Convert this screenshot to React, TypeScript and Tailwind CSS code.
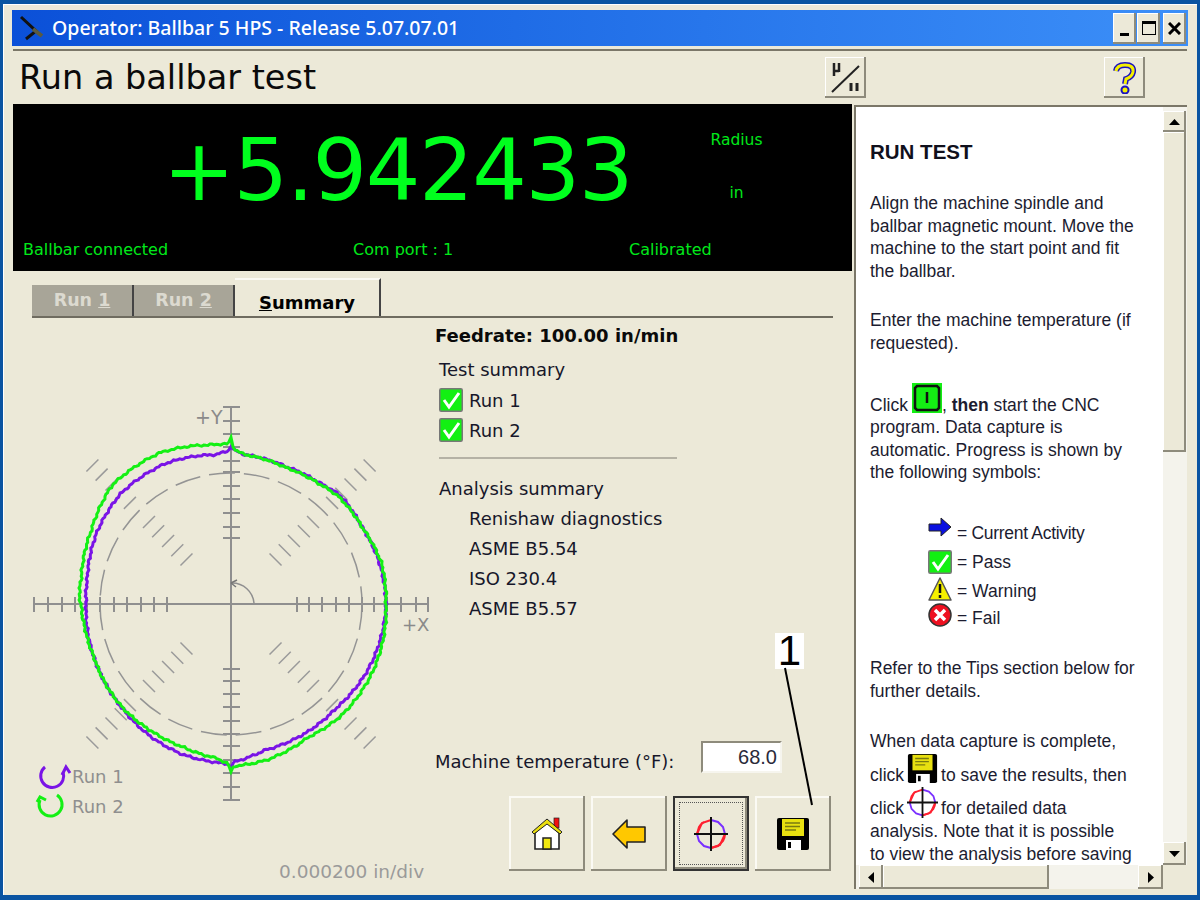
import React from "react";

const pk: number[][] = [[0,155],[15,154],[30,152],[45,154],[54,150],[68,148],[85,150],[89,154],[90,158],[91,153],[96,150],[115,155],[135,156],[152,152],[170,146],[180,145],[190,146],[201,147],[215,149],[225,151],[239,155],[252,158],[265,159],[269,160],[270,164],[271,158],[283,150],[300,149],[315,148],[335,152],[350,154],[360,155]];
const gk: number[][] = [[0,155],[15,156],[30,152],[45,152],[54,149],[68,147],[85,150],[89,155],[90,166],[91,160],[98,160.5],[115,167],[135,168],[152,158],[170,152],[177,152],[180,150],[190,148],[201,147],[215,149],[225,150],[239,150],[252,151],[265,155],[269,160],[270,168],[271,162],[283,160],[300,154],[315,157],[335,157],[350,156],[360,155]];

function trace(keys: number[][], seed: number) {
  const pts: string[] = [];
  for (let a = 0; a < 360; a += 0.75) {
    let i = 0;
    while (keys[i + 1][0] <= a) i++;
    const [a0, r0] = keys[i];
    const [a1, r1] = keys[i + 1];
    const r = r0 + ((r1 - r0) * (a - a0)) / (a1 - a0) + 0.6 * Math.sin(a * 2.7 + seed) + 0.5 * Math.sin(a * 7.3 + seed * 2);
    const t = (a * Math.PI) / 180;
    pts.push(`${(232 + r * Math.cos(t)).toFixed(1)},${(604 - r * Math.sin(t)).toFixed(1)}`);
  }
  return pts.join(" ");
}

const xTicks = [35, 49, 63, 76, 88, 101, 115, 128, 142, 155, 168, 298, 310, 323, 337, 350, 363, 375, 388, 402, 417, 429];
const yTicks = [407, 421, 434, 447, 461, 472, 486, 499, 513, 527, 538, 669, 681, 694, 707, 721, 734, 746, 760, 773, 787, 800];
const dTicks = [63, 76, 89, 103, 116, 143, 156, 169, 183, 196];

function Chart() {
  const s = Math.SQRT1_2;
  return (
    <svg className="block w-[422px] h-[567px]" viewBox="14 318 422 567" fill="none">
      <g stroke="#8f8f8f" strokeWidth="2">
        <line x1="35" y1="604" x2="430" y2="604" />
        <line x1="232" y1="406" x2="232" y2="801" />
        {xTicks.map((x) => <line key={x} x1={x} y1="597" x2={x} y2="612" />)}
        {yTicks.map((y) => <line key={y} x1="224" y1={y} x2="241" y2={y} />)}
      </g>
      <g stroke="#9a9a9a" strokeWidth="1.5">
        {[[-1, -1], [1, -1], [-1, 1], [1, 1]].map(([sx, sy]) =>
          dTicks.map((d) => {
            const cx = 232 + sx * d * s;
            const cy = 604 + sy * d * s;
            const h = 6;
            return <line key={`${sx}${sy}${d}`} x1={cx - sy * h} y1={cy + sx * h} x2={cx + sy * h} y2={cy - sx * h} />;
          })
        )}
      </g>
      <circle cx="232" cy="604" r="131" stroke="#949494" strokeWidth="1.5" strokeDasharray="26 9" />
      <path d="M233 583 A22 22 0 0 1 255 603" stroke="#8f8f8f" strokeWidth="1.5" />
      <path d="M232 583 L238 580 M232 583 L237 587" stroke="#777" strokeWidth="1.5" />
      <polygon points={trace(pk, 1.1)} stroke="#7a14e6" strokeWidth="3" />
      <polygon points={trace(gk, 2.9)} stroke="#14f014" strokeWidth="3" />
      <text x="196" y="424" fill="#8a8a8a" fontSize="19" fontFamily="'DejaVu Sans', sans-serif">+Y</text>
      <text x="403" y="631" fill="#8a8a8a" fontSize="18" fontFamily="'DejaVu Sans', sans-serif">+X</text>
      <path d="M46 767 A11.5 11.5 0 1 0 64 772" stroke="#7a14e6" strokeWidth="3" />
      <path d="M63 775 L67 767 L71 773" stroke="#7a14e6" strokeWidth="3" />
      <path d="M58 795 A11.5 11.5 0 1 1 41 800" stroke="#14f014" strokeWidth="3" />
      <path d="M38 802 L41 797 L47 800" stroke="#14f014" strokeWidth="3" />
      <text x="73" y="783" fill="#8f8f8f" fontSize="18" fontFamily="'DejaVu Sans', sans-serif">Run 1</text>
      <text x="73" y="813" fill="#8f8f8f" fontSize="18" fontFamily="'DejaVu Sans', sans-serif">Run 2</text>
      <text x="280" y="878" fill="#9a9a9a" fontSize="18.5" fontFamily="'DejaVu Sans', sans-serif">0.000200 in/div</text>
    </svg>
  );
}

function Floppy({ size = 34 }: { size?: number }) {
  return (
    <svg width={size} height={size} viewBox="0 0 34 34">
      <path d="M3 1 H31 Q33 1 33 3 V31 Q33 33 31 33 H3 Q1 33 1 31 V3 Q1 1 3 1Z" fill="#000" />
      <rect x="6" y="2" width="22" height="17" fill="#e8e010" />
      <path d="M9 6 H24 M9 9.5 H24 M9 13 H20" stroke="#7a7a10" strokeWidth="1.5" />
      <rect x="10" y="23" width="15" height="10" fill="#fff" />
      <rect x="12" y="25" width="3" height="6" fill="#000" />
    </svg>
  );
}

function Target({ size = 34 }: { size?: number }) {
  return (
    <svg width={size} height={size} viewBox="0 0 34 34" fill="none">
      <path d="M10 5 A14.5 14.5 0 0 0 5 10 L3 17 M31 17 A14.5 14.5 0 0 1 29 24 L24 29 L17 31" stroke="#ff2030" strokeWidth="2" />
      <path d="M17 3 L24 5 L29 10 L31 17 M3 17 L5 24 L10 29 L17 31" stroke="#7a30ff" strokeWidth="2" />
      <path d="M17 3 L8 6 L3 17 M17 31 L26 28 L31 17" stroke="#ff2030" strokeWidth="2" />
      <path d="M17 0 V34 M0 17 H34" stroke="#111" strokeWidth="2" />
    </svg>
  );
}

function Home() {
  return (
    <svg width="32" height="34" viewBox="0 0 32 34">
      <rect x="23" y="1" width="5" height="10" fill="#f01010" stroke="#222" strokeWidth="0.7" />
      <path d="M4 16 V32 H28 V16 L16 5 Z" fill="#fff" stroke="#222" strokeWidth="1.6" />
      <path d="M1 15 L16 2 L31 15 L29 17 L16 7 L3 17 Z" fill="#eadf10" stroke="#222" strokeWidth="1" />
      <rect x="12" y="21" width="8" height="11" fill="#f0e810" stroke="#222" strokeWidth="1.5" />
    </svg>
  );
}

function BackArrow() {
  return (
    <svg width="34" height="30" viewBox="0 0 34 30">
      <path d="M1 15 L15 1 V8 H33 V23 H15 V29 Z" fill="#ffc800" stroke="#222" strokeWidth="1.6" strokeLinejoin="round" />
    </svg>
  );
}

function GreenCheck({ size = 24 }: { size?: number }) {
  return (
    <svg width={size} height={size} viewBox="0 0 24 24" className="shrink-0">
      <rect x="0.75" y="0.75" width="22.5" height="22.5" rx="1.5" fill="#12f012" stroke="#777" strokeWidth="1.5" />
      <path d="M5 12 L10 19 L20 5" fill="none" stroke="#fff" strokeWidth="3" />
    </svg>
  );
}

function NavButton({ children, selected }: { children: React.ReactNode; selected?: boolean }) {
  if (selected) {
    return (
      <div className="w-[76px] h-[75px] border-2 border-[#333] bg-[#ece9d8] p-[4px] shadow-[inset_-2px_-2px_0_#8e8b7c]">
        <div className="w-full h-full border border-dotted border-[#555] flex items-center justify-center">{children}</div>
      </div>
    );
  }
  return (
    <div className="w-[76px] h-[75px] bg-[#ece9d8] flex items-center justify-center shadow-[inset_-2px_-2px_0_#8e8b7c,inset_2px_2px_0_#fbfaf4]">
      {children}
    </div>
  );
}

function WinBtn({ children, w }: { children: React.ReactNode; w: string }) {
  return (
    <div className={`${w} h-[31px] bg-[#ece9d8] flex items-center justify-center shadow-[inset_-2px_-2px_0_#8e8b7c,inset_1px_1px_0_#fff]`}>
      {children}
    </div>
  );
}

function ToolBtn({ children }: { children: React.ReactNode }) {
  return (
    <div className="w-[41px] h-[41px] bg-[#ece9d8] flex items-center justify-center shadow-[inset_-2px_-2px_0_#8e8b7c,inset_1px_1px_0_#fff]">
      {children}
    </div>
  );
}

function ScrollBtn({ children, className }: { children: React.ReactNode; className: string }) {
  return (
    <div className={`${className} bg-[#ece9d8] flex items-center justify-center shadow-[inset_-2px_-2px_0_#8e8b7c,inset_1px_1px_0_#fff]`}>
      {children}
    </div>
  );
}

function Ln({ children, className = "" }: { children: React.ReactNode; className?: string }) {
  return <div className={`h-[22.6px] leading-[22.6px] whitespace-nowrap ${className}`}>{children}</div>;
}

const verdana = "font-['DejaVu_Sans',sans-serif]";

export default function App() {
  return (
    <div className="relative w-[1200px] h-[900px] overflow-hidden bg-[#0a54a2] pt-[4px] px-[3px] pb-[5px]">
      <div className="h-full bg-[#ece9d8] pt-[6px] pl-[9px] pr-[9px] pb-[6px] flex flex-col shadow-[inset_1px_1px_0_#fff]">
        {/* title bar */}
        <div className="h-[36px] shrink-0 bg-gradient-to-r from-[#0b50d8] to-[#3c8ff8] flex items-center pr-[2px]">
          <svg width="28" height="28" viewBox="0 0 28 28" className="ml-[6px]" fill="none">
            <path d="M3 3 L18 17 L8 25" stroke="#111" strokeWidth="3" />
            <path d="M15 15 L24 22" stroke="#5a5a40" strokeWidth="4" />
          </svg>
          <span className="ml-[6px] text-white text-[19.5px] font-medium font-['Noto_Sans',sans-serif] whitespace-nowrap">Operator: Ballbar 5 HPS - Release 5.07.07.01</span>
          <div className="ml-auto flex items-center">
            <WinBtn w="w-[23px]"><div className="w-[9px] h-[3px] bg-black mt-[12px]" /></WinBtn>
            <div className="w-px" />
            <WinBtn w="w-[23px]"><div className="w-[14px] h-[14px] border border-black border-t-[3px]" /></WinBtn>
            <div className="w-[3px]" />
            <WinBtn w="w-[23px]">
              <svg width="13" height="13" viewBox="0 0 13 13"><path d="M1 1 L12 12 M12 1 L1 12" stroke="#000" strokeWidth="3" /></svg>
            </WinBtn>
          </div>
        </div>
        {/* body */}
        <div className="flex-1 min-h-0 mt-[3px] -mx-[0px] ml-[1px] mr-[1px] border-t-2 border-[#7b7768] flex flex-col">
          {/* heading strip */}
          <div className="h-[53px] shrink-0 flex items-center">
            <span className={`ml-[6px] text-[33.5px] leading-none text-[#0a0a0a] whitespace-nowrap ${verdana}`}>Run a ballbar test</span>
            <div className="ml-auto mr-[238px]">
              <ToolBtn>
                <svg width="32" height="32" viewBox="0 0 32 32" fill="none">
                  <path d="M4 1 V14 M9 1 V10 M3 9 H9" stroke="#222" strokeWidth="2.5" />
                  <path d="M2 30 L29 4" stroke="#222" strokeWidth="2" />
                  <path d="M21 21 V29 M27 21 V29" stroke="#222" strokeWidth="3" />
                </svg>
              </ToolBtn>
            </div>
            <div className="mr-[42px]">
              <ToolBtn>
                <svg width="26" height="32" viewBox="0 0 26 32" fill="none">
                  <path d="M4 9 Q5 3 13 3 Q22 3 21 10 Q20 15 14 17 L13 22" stroke="#1a12c0" strokeWidth="6" />
                  <path d="M4 9 Q5 3 13 3 Q22 3 21 10 Q20 15 14 17 L13 22" stroke="#f5f000" strokeWidth="3" />
                  <circle cx="13" cy="28" r="3.5" fill="#f5f000" stroke="#1a12c0" strokeWidth="2" />
                </svg>
              </ToolBtn>
            </div>
          </div>
          <div className="flex-1 min-h-0 flex">
            {/* left */}
            <div className="w-[839px] shrink-0 flex flex-col">
              <div className={`h-[167px] shrink-0 bg-black text-[#00e81a] flex flex-col ${verdana}`}>
                <div className="h-[130px] flex">
                  <div className="w-[687px] pl-[150px] pt-[16px]">
                    <span className="text-[86px] leading-[100px] tracking-[-1.5px] text-[#00ff1e] whitespace-nowrap">+5.942433</span>
                  </div>
                  <div className="w-[73px] text-center text-[15.5px] pt-[26px] flex flex-col gap-[33px]">
                    <span className="leading-[20px]">Radius</span>
                    <span className="leading-[20px]">in</span>
                  </div>
                </div>
                <div className="grid grid-cols-[330px_276px_1fr] pl-[10px] pt-[6px] text-[16px] leading-[20px]">
                  <span>Ballbar connected</span>
                  <span>Com port : 1</span>
                  <span>Calibrated</span>
                </div>
              </div>
              {/* tabs */}
              <div className={`ml-[19px] mr-[19px] mt-[8px] h-[39px] shrink-0 border-b-2 border-[#6f6c60] flex items-end ${verdana}`}>
                <div className="w-[102px] h-[31px] bg-[#a8a598] border-r-2 border-[#444] text-center text-[#dcdad0] font-bold text-[17.5px] leading-[31px]">Run <span className="underline">1</span></div>
                <div className="w-[101px] h-[31px] bg-[#a8a598] border-r-2 border-[#444] text-center text-[#dcdad0] font-bold text-[17.5px] leading-[31px]">Run <span className="underline">2</span></div>
                <div className="w-[146px] h-[38px] border-r-2 border-[#444] border-t-2 border-t-[#fbfaf4] text-center text-black font-bold text-[18px] leading-[46px]"><span className="underline">S</span>ummary</div>
              </div>
              <div className="flex-1 min-h-0 flex">
                <div className="w-[422px] shrink-0"><Chart /></div>
                <div className={`flex-1 flex flex-col text-[18px] text-[#17172a] pr-[21px] ${verdana}`}>
                  <div className="mt-[6px] h-[24px] leading-[24px] font-bold text-[#0a0a0a] whitespace-nowrap">Feedrate: 100.00 in/min</div>
                  <div className="mt-[7px] ml-[4px] h-[30px] leading-[30px]">Test summary</div>
                  <div className="ml-[4px] h-[30px] flex items-center gap-[6px]"><GreenCheck /><span>Run 1</span></div>
                  <div className="ml-[4px] h-[30px] flex items-center gap-[6px]"><GreenCheck /><span>Run 2</span></div>
                  <div className="mt-[12px] ml-[4px] w-[238px] h-[2px] bg-[#b5b2a5]" />
                  <div className="mt-[15px] ml-[4px] h-[30px] leading-[30px]">Analysis summary</div>
                  <div className="ml-[34px] h-[30px] leading-[30px]">Renishaw diagnostics</div>
                  <div className="ml-[34px] h-[30px] leading-[30px]">ASME B5.54</div>
                  <div className="ml-[34px] h-[30px] leading-[30px]">ISO 230.4</div>
                  <div className="ml-[34px] h-[30px] leading-[30px]">ASME B5.57</div>
                  <div className="flex-1" />
                  <div className="flex items-center h-[32px] mb-[23px]">
                    <span className="w-[266px] whitespace-nowrap pt-[8px]">Machine temperature (°F):</span>
                    <div className="w-[81px] h-[32px] bg-white border-2 border-[#8e8b7c] border-r-[#f6f5ee] border-b-[#f6f5ee] text-right pr-[3px] leading-[28px] font-['Liberation_Sans',sans-serif] text-[20px] text-[#2a2a3a]">68.0</div>
                  </div>
                  <div className="flex justify-end gap-[6px] mb-[18px]">
                    <NavButton><Home /></NavButton>
                    <NavButton><BackArrow /></NavButton>
                    <NavButton selected><Target /></NavButton>
                    <NavButton><Floppy /></NavButton>
                  </div>
                </div>
              </div>
            </div>
            <div className="w-[2px] shrink-0" />
            {/* help */}
            <div className="flex-1 min-w-0 mt-[1px] bg-white border-t-2 border-l-2 border-[#7b7768] flex flex-col">
              <div className="flex-1 min-h-0 flex">
                <div className="flex-1 min-w-0 overflow-hidden pl-[14px] pt-[32px] font-['Liberation_Sans',sans-serif] text-[17.5px] text-[#1c1c30]">
                  <div className="h-[26px] leading-[26px] text-[20.5px] font-bold text-[#10101c]">RUN TEST</div>
                  <div className="h-[27px]" />
                  <Ln>Align the machine spindle and</Ln>
                  <Ln>ballbar magnetic mount. Move the</Ln>
                  <Ln>machine to the start point and fit</Ln>
                  <Ln>the ballbar.</Ln>
                  <div className="h-[27px]" />
                  <Ln>Enter the machine temperature (if</Ln>
                  <Ln>requested).</Ln>
                  <div className="h-[39px]" />
                  <Ln className="flex items-end">
                    <span>Click</span>
                    <svg width="30" height="30" viewBox="0 0 30 30" className="mb-[3px] ml-[4px] shrink-0" fill="none">
                      <rect width="30" height="30" fill="#14ee14" />
                      <path d="M5 3 H25 L27 5 V25 L25 27 H5 L3 25 V5 Z" stroke="#111" strokeWidth="2.5" />
                      <path d="M15 9 V20" stroke="#111" strokeWidth="2.5" />
                    </svg>
                    <span>, <b>then</b> start the CNC</span>
                  </Ln>
                  <Ln>program. Data capture is</Ln>
                  <Ln>automatic. Progress is shown by</Ln>
                  <Ln>the following symbols:</Ln>
                  <div className="h-[32px]" />
                  <div className="pl-[58px]">
                    <div className="h-[29px] flex items-end gap-[5px] leading-[24px] text-[17.5px] tracking-[-0.3px]">
                      <svg width="24" height="24" viewBox="0 0 24 24" className="mb-[5px] shrink-0"><path d="M1 8 H13 V2 L23 11 L13 20 V15 H1 Z" fill="#0a10e0" stroke="#222" strokeWidth="1" /></svg>
                      <span>= Current Activity</span>
                    </div>
                    <div className="h-[29px] flex items-end gap-[5px] leading-[24px]">
                      <GreenCheck size={24} />
                      <span>= Pass</span>
                    </div>
                    <div className="h-[29px] flex items-end gap-[5px] leading-[24px]">
                      <svg width="24" height="25" viewBox="0 0 24 25" className="mb-[1px] shrink-0"><path d="M12 1 L23 23 H1 Z" fill="#f5f000" stroke="#555" strokeWidth="1.5" strokeLinejoin="round" /><path d="M12 7 V16 M12 18 V21" stroke="#111" strokeWidth="2.5" /></svg>
                      <span>= Warning</span>
                    </div>
                    <div className="h-[27px] flex items-end gap-[5px] leading-[24px]">
                      <svg width="24" height="24" viewBox="0 0 24 24" className="mb-[3px] shrink-0"><circle cx="12" cy="12" r="11" fill="#ee1020" stroke="#333" strokeWidth="1.5" /><path d="M7 7 L17 17 M17 7 L7 17" stroke="#fff" strokeWidth="3.5" /></svg>
                      <span>= Fail</span>
                    </div>
                  </div>
                  <div className="h-[27px]" />
                  <Ln>Refer to the Tips section below for</Ln>
                  <Ln>further details.</Ln>
                  <div className="h-[28px]" />
                  <Ln>When data capture is complete,</Ln>
                  <div className="h-[11px]" />
                  <Ln className="flex items-end">
                    <span>click</span>
                    <span className="mb-[2px] ml-[3px] shrink-0 block"><Floppy size={31} /></span>
                    <span className="ml-[3px]">to save the results, then</span>
                  </Ln>
                  <div className="h-[11px]" />
                  <Ln className="flex items-end">
                    <span>click</span>
                    <span className="mb-[2px] ml-[3px] shrink-0 block"><Target size={31} /></span>
                    <span className="ml-[3px]">for detailed data</span>
                  </Ln>
                  <Ln>analysis. Note that it is possible</Ln>
                  <Ln>to view the analysis before saving</Ln>
                </div>
                {/* vertical scrollbar */}
                <div className="w-[24px] shrink-0 bg-[#f4f3ec] flex flex-col pt-[4px]">
                  <ScrollBtn className="h-[21px] w-[23px] shrink-0">
                    <svg width="11" height="6" viewBox="0 0 11 6"><path d="M5.5 0 L11 6 H0 Z" fill="#000" /></svg>
                  </ScrollBtn>
                  <div className="h-[320px] w-[23px] shrink-0 bg-[#ece9d8] shadow-[inset_-2px_-2px_0_#8e8b7c,inset_1px_1px_0_#fff]" />
                  <div className="flex-1" />
                  <ScrollBtn className="h-[23px] w-[23px] shrink-0">
                    <svg width="11" height="6" viewBox="0 0 11 6"><path d="M5.5 6 L11 0 H0 Z" fill="#000" /></svg>
                  </ScrollBtn>
                </div>
              </div>
              {/* horizontal scrollbar */}
              <div className="h-[24px] shrink-0 flex bg-[#f4f3ec]">
                <ScrollBtn className="w-[24px] shrink-0 ml-[3px]">
                  <svg width="6" height="11" viewBox="0 0 6 11"><path d="M0 5.5 L6 0 V11 Z" fill="#000" /></svg>
                </ScrollBtn>
                <div className="w-[166px] bg-[#ece9d8] shadow-[inset_-2px_-2px_0_#8e8b7c,inset_1px_1px_0_#fff]" />
                <div className="flex-1" />
                <ScrollBtn className="w-[25px] shrink-0">
                  <svg width="6" height="11" viewBox="0 0 6 11"><path d="M6 5.5 L0 0 V11 Z" fill="#000" /></svg>
                </ScrollBtn>
                <div className="w-[24px] shrink-0 bg-[#ece9d8]" />
              </div>
            </div>
          </div>
        </div>
      </div>
      {/* callout */}
      <div className="absolute left-[775px] top-[633px] w-[29px] h-[36px] bg-white text-black text-center font-['Liberation_Sans',sans-serif] text-[42px] leading-[36px]">1</div>
      <svg className="absolute left-[780px] top-[665px]" width="40" height="145" viewBox="0 0 40 145" fill="none">
        <path d="M5 3 L32 140" stroke="#000" strokeWidth="2" />
      </svg>
    </div>
  );
}
